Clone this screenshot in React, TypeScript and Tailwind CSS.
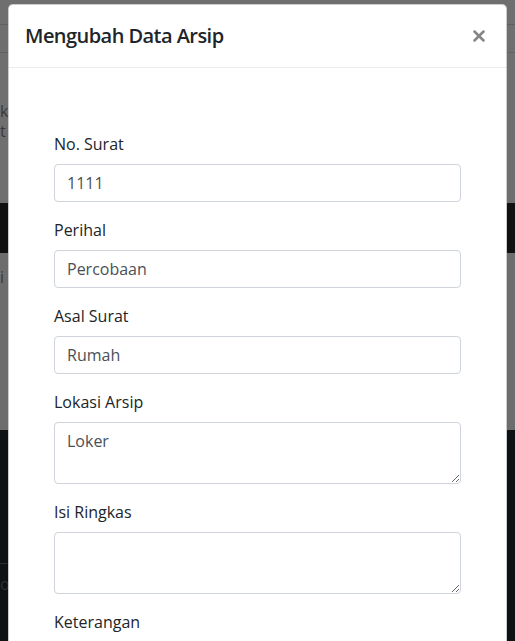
import { X } from 'lucide-react';

const fields = [
  { label: 'No. Surat', value: '1111', type: 'input' },
  { label: 'Perihal', value: 'Percobaan', type: 'input' },
  { label: 'Asal Surat', value: 'Rumah', type: 'input' },
  { label: 'Lokasi Arsip', value: 'Loker', type: 'textarea' },
  { label: 'Isi Ringkas', value: '', type: 'textarea' },
  { label: 'Keterangan', value: '', type: 'input' },
];

function Backdrop() {
  // page behind the modal, already dimmed by the backdrop
  return (
    <div className="flex flex-col h-full text-[#3a3a3a]">
      <div className="h-[25px] bg-[#6f6f6f] border-b border-[#606060]" />
      <div className="h-[28px] bg-[#6f6f6f] border-b border-[#626262]" />
      <div className="h-[150px] bg-[#6f6f6f] pt-[48px] text-[16px] leading-[20px]">
        <div>kt</div>
        <div>t</div>
      </div>
      <div className="h-[50px] bg-[#111111]" />
      <div className="h-[177px] bg-[#6d6d6d] pt-[12px] text-[16px]">
        <div>i</div>
      </div>
      <div className="flex-1 bg-[#0e1214] pt-[112px] text-[#2c3034] text-[16px] leading-[28px]">
        <div>_</div>
        <div>oe</div>
      </div>
    </div>
  );
}

export default function App() {
  return (
    <div
      className="relative w-[515px] h-[641px] overflow-hidden"
      style={{ fontFamily: '"Open Sans", "Noto Sans", sans-serif' }}
    >
      <Backdrop />

      {/* Modal */}
      <div className="absolute left-[8px] top-[4px] w-[499px] bg-white rounded-[5px] border border-black/20">
        <div className="flex items-start justify-between p-4 border-b border-[#e9ecef]">
          <h5 className="text-[20px] leading-[30px] font-semibold text-[#212529] tracking-[-0.55px]">Mengubah Data Arsip</h5>
          <button className="mt-[6px] mr-[2px] text-[#858585]">
            <X className="w-[18px] h-[18px]" strokeWidth={3.4} />
          </button>
        </div>

        <div className="px-[45px] pt-[64px] pb-4">
          {fields.map((f) => (
            <div key={f.label} className="mb-4">
              <label className="block mb-2 text-[16px] leading-[24px] text-[#212529]">{f.label}</label>
              {f.type === 'input' ? (
                <input
                  defaultValue={f.value}
                  className="block w-full h-[38px] px-3 py-[6px] text-[16px] leading-[24px] text-[#495057] border border-[#ced4da] rounded-[4px] outline-none"
                />
              ) : (
                <textarea
                  rows={2}
                  defaultValue={f.value}
                  className="block w-full h-[62px] px-3 py-[6px] text-[16px] leading-[24px] text-[#495057] border border-[#ced4da] rounded-[4px] outline-none"
                />
              )}
            </div>
          ))}
        </div>
      </div>
    </div>
  );
}
